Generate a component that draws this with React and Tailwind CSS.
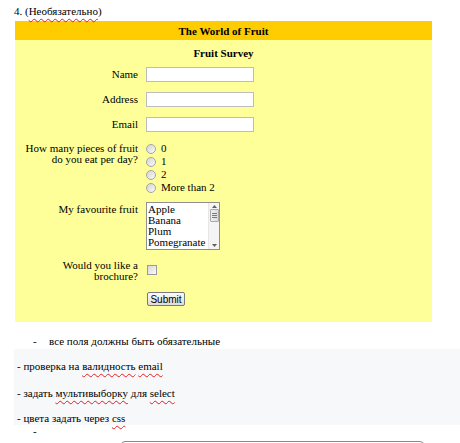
import React from "react";

const wavy = "underline decoration-wavy decoration-[#e02020] decoration-1 underline-offset-[3px]";

function Radio({ label }) {
  return (
    <div className="flex h-[13px] items-center gap-[5px]">
      <span className="h-[10px] w-[10px] rounded-full border border-[#a4a4a4] bg-gradient-to-br from-[#d4d4d4] to-[#fafafa]" />
      <span>{label}</span>
    </div>
  );
}

function FruitList() {
  const fruits = ["Apple", "Banana", "Plum", "Pomegranate"];
  return (
    <div className="flex h-[48px] w-[74px] border border-[#8f8f8f] bg-white">
      <div className="flex-1 overflow-hidden pl-[1px] pt-[1px]">
        {fruits.map((f) => (
          <div key={f} className="h-[11px] leading-[11px] whitespace-nowrap">{f}</div>
        ))}
      </div>
      <div className="flex w-[11px] flex-col items-center justify-between border-l border-[#e6e6e6] bg-[#f4f4f4] py-[1px]">
        <svg width="7" height="5" viewBox="0 0 7 5"><path d="M1 4 L3.5 1 L6 4 Z" fill="#606060" /></svg>
        <div className="flex h-[13px] w-[9px] flex-col items-center justify-center gap-[1px] rounded-[1px] border border-[#a8a8a8] bg-gradient-to-r from-[#f0f0f0] to-[#dcdcdc]">
          <span className="h-px w-[5px] bg-[#7a7a7a]" />
          <span className="h-px w-[5px] bg-[#7a7a7a]" />
          <span className="h-px w-[5px] bg-[#7a7a7a]" />
        </div>
        <div className="flex-1" />
        <svg width="7" height="5" viewBox="0 0 7 5"><path d="M1 1 L3.5 4 L6 1 Z" fill="#606060" /></svg>
      </div>
    </div>
  );
}

export default function App() {
  const input = "h-[15px] w-[108px] border border-[#bdbdbd] bg-white";
  return (
    <div className="h-[443px] w-[460px] overflow-hidden bg-white text-[11px] text-black" style={{ fontFamily: '"Liberation Serif", serif' }}>
      <div className="pl-[14px] pt-[5px] leading-[13px]">
        4. (<span className={wavy}>Необязательно</span>)
      </div>

      <div className="ml-[15px] mt-[3px] w-[417px]">
        <div className="h-[19px] border-t border-[#d6c98e] bg-[#ffcc00] text-center font-bold leading-[18px]">The World of Fruit</div>
        <div className="h-[282px] bg-[#ffff99]">
          <div className="pt-[7px] text-center font-bold leading-[13px]">Fruit Survey</div>

          <div className="mt-[7px] grid grid-cols-[123px_1fr] gap-x-[8px]">
            <div className="flex h-[15px] items-center justify-end">Name</div>
            <div className={input} />
            <div className="mt-[10px] flex h-[15px] items-center justify-end">Address</div>
            <div className={`mt-[10px] ${input}`} />
            <div className="mt-[10px] flex h-[15px] items-center justify-end">Email</div>
            <div className={`mt-[10px] ${input}`} />

            <div className="mt-[10px] pt-[1px] text-right leading-[11px]">How many pieces of fruit<br />do you eat per day?</div>
            <div className="mt-[10px]">
              <Radio label="0" />
              <Radio label="1" />
              <Radio label="2" />
              <Radio label="More than 2" />
            </div>

            <div className="mt-[8px] pt-[1px] text-right leading-[12px]">My favourite fruit</div>
            <div className="mt-[8px]"><FruitList /></div>

            <div className="mt-[10px] text-right leading-[11px]">Would you like a<br />brochure?</div>
            <div className="mt-[10px] flex h-[20px] items-center pl-[1px]">
              <span className="h-[10px] w-[10px] border border-[#9a9a9a] bg-gradient-to-br from-[#d8d8d8] to-[#fbfbfb]" />
            </div>

            <div />
            <div className="mt-[10px] pl-[1px]">
              <div className="flex h-[14px] w-[38px] items-center justify-center rounded-[2px] border border-[#7a7a7a] bg-gradient-to-b from-[#fafafa] to-[#dcdcdc] text-[10px]" style={{ fontFamily: '"Liberation Sans", sans-serif' }}>
                Submit
              </div>
            </div>
          </div>
        </div>
      </div>

      <div className="mt-[13px] flex leading-[13px]">
        <span className="w-[49px] pl-[33px]">-</span>
        <span>все поля должны быть обязательные</span>
      </div>
      <div className="ml-[14px] mt-[1px] bg-[#f7f8fa] pl-[3px] pt-[11px] leading-[13px]">
        <div>- проверка на <span className={wavy}>валидность</span> <span className={wavy}>email</span></div>
        <div className="mt-[14px]">- задать <span className={wavy}>мультивыборку</span> для <span className={wavy}>select</span></div>
        <div className="mt-[12px]">- цвета задать через <span className={wavy}>css</span></div>
      </div>
      <div className="pl-[33px] leading-[13px]">-</div>
      <div className="ml-[121px] mt-[3px] h-[10px] w-[303px] rounded-t-[4px] border border-[#8a8a8a]" />
    </div>
  );
}
